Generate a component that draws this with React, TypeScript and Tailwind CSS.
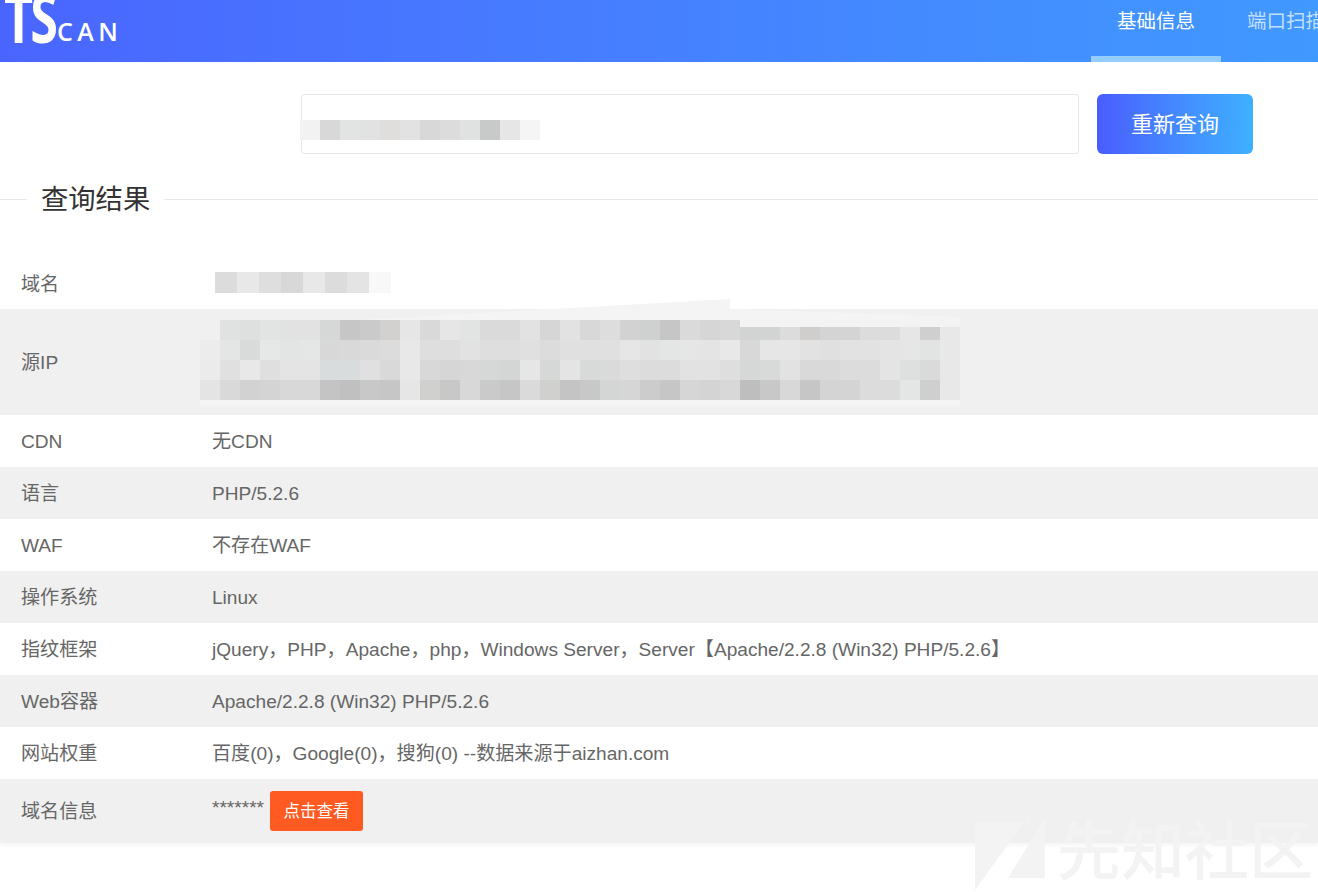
import type { ReactNode } from "react";

const row2Mosaic = [
  ["#f0f0f0", "#e0e2e1", "#dedfdf", "#e2e3e3", "#e2e2e2", "#e2e2e2", "#d6d8d8", "#c6c6c6", "#cacaca", "#d2d1d0", "#e6e6e6", "#d9d9d9", "#e6e6e6", "#e2e3e3", "#dadada", "#dadada", "#e2e2e2", "#d6d6d6", "#e2e2e2", "#d8d8d8", "#dddddd", "#d2d2d2", "#cfd1d1", "#c6c6c6", "#dadada", "#d6d6d6", "#d8d8d8", "#d2d4d4", "#d2d4d4", "#dcdcdc", "#cfcecd", "#d4d4d4", "#d4d4d4", "#dcdcdc", "#dcdcdc", "#e6e6e6", "#cfcfcf", "#e8e8e8"],
  ["#ececec", "#e4e6e5", "#d9dada", "#e6e7e7", "#e3e5e5", "#e5e6e6", "#d8d8d8", "#d9d9d9", "#dadada", "#dcdcdc", "#e8e8e8", "#dedede", "#dedede", "#e2e2e2", "#dedede", "#dedede", "#e0e0e0", "#dcdcdc", "#e0e0e0", "#e0e0e0", "#e0e0e0", "#e6e6e6", "#e2e2e2", "#e4e6e6", "#e6e6e6", "#e4e4e4", "#e8e8e8", "#d8d8d8", "#e6e6e6", "#e6e6e6", "#e2e2e2", "#e0e0e0", "#e2e2e2", "#e2e2e2", "#e4e4e4", "#e6e6e6", "#e2e4e4", "#e8e8e8"],
  ["#ebebeb", "#e0e0e0", "#e8e8e8", "#dfdfdf", "#e4e4e4", "#e4e4e4", "#d9dcdc", "#d9dcdc", "#e0e0e0", "#d9d9d9", "#e8e8e8", "#d8d8d8", "#d6d6d6", "#d8d8d8", "#d6d8d8", "#d4d6d6", "#e6e6e6", "#d6d8d8", "#e4e4e4", "#d8dada", "#dadada", "#dedede", "#dcdcdc", "#dcdcdc", "#e2e2e2", "#e2e2e2", "#dedede", "#d6d8d8", "#d8dada", "#e2e2e2", "#d9d9d9", "#d9d9d9", "#dcdcdc", "#dcdcdc", "#e4e4e4", "#dee0e0", "#dadada", "#e8e8e8"],
  ["#e4e4e4", "#d9d9d9", "#d2d2d2", "#d4d4d4", "#d8d8d8", "#d8d8d8", "#c4c4c4", "#c0c0c0", "#c8c8c8", "#c6c6c6", "#e6e6e6", "#d0d0ce", "#c8c8c8", "#d8d8d8", "#cacaca", "#c6c6c6", "#dadada", "#d0d0ce", "#c4c4c4", "#c8c8c8", "#d4d6d6", "#d6d6d6", "#cccccc", "#c6c6c6", "#d6d6d6", "#d4d4d4", "#d8d8d8", "#bebebe", "#c8c8c8", "#d8d8d8", "#c6c6c6", "#d4d4d4", "#d4d4d4", "#dcdcdc", "#dcdcdc", "#e4e6e6", "#cfcfcf", "#e8e8e8"],
];
const row1Mosaic = [["#dcdcdc", "#e8e8e8", "#dedede", "#d8d8d8", "#e8e8e8", "#dcdcdc", "#e4e4e4", "#f8f8f8"]];
const inputMosaic = [["#f2f2f2", "#d8d8d8", "#e2e4e4", "#e2e2e2", "#e0dedc", "#e2e2e2", "#d8d8d8", "#dcdcdc", "#e0e2e2", "#c8caca", "#e6e6e6", "#f5f5f5"]];

// blurred-out values in the screenshot
const Mosaic = ({ cells, w, h, className }: { cells: string[][]; w: number; h: number; className: string }) => (
  <svg className={className} width={cells[0].length * w} height={cells.length * h}>
    {cells.map((row, y) => row.map((c, x) => <rect key={x + "-" + y} x={x * w} y={y * h} width={w} height={h} fill={c} />))}
  </svg>
);

const rows: { label: string; value: ReactNode }[] = [
  { label: "CDN", value: "无CDN" },
  { label: "语言", value: "PHP/5.2.6" },
  { label: "WAF", value: "不存在WAF" },
  { label: "操作系统", value: "Linux" },
  { label: "指纹框架", value: "jQuery，PHP，Apache，php，Windows Server，Server【Apache/2.2.8 (Win32) PHP/5.2.6】" },
  { label: "Web容器", value: "Apache/2.2.8 (Win32) PHP/5.2.6" },
  { label: "网站权重", value: "百度(0)，Google(0)，搜狗(0) --数据来源于aizhan.com" },
];

const Row = ({ label, children, grey, h }: { label: string; children?: ReactNode; grey: boolean; h: string }) => (
  <div className={`relative flex items-center pt-[2px] ${h} ${grey ? "bg-[#f0f0f0]" : "bg-white"}`}>
    <div className="w-[212px] shrink-0 pl-[21px]">{label}</div>
    <div className="flex items-center whitespace-nowrap">{children}</div>
  </div>
);

export default function App() {
  return (
    <div className="relative h-[892px] w-[1318px] overflow-hidden bg-white font-['Liberation_Sans','Noto_Sans_CJK_SC',sans-serif] text-[19.1px] text-[#666666]">
      <header className="flex h-[62px] bg-gradient-to-r from-[#4a65ff] to-[#4099ff] text-white">
        <div className="flex h-[62px] w-[1091px] shrink-0 overflow-hidden pl-[4px] font-['Open_Sans',sans-serif]">
          <span className="mt-[-17px] w-[53px] shrink-0 origin-left scale-x-[0.74] text-[68px] leading-[68px] font-bold tracking-[-4px]">TS</span>
          <span className="mt-[14px] text-[25px] leading-[34px] font-semibold tracking-[4.5px]">CAN</span>
        </div>
        <nav className="flex shrink-0">
          <div className="h-[62px] w-[130px] border-b-[6px] border-[#93cdff] pt-[7px] text-center text-[19.5px] leading-[28px]">基础信息</div>
          <div className="h-[62px] w-[130px] pt-[7px] text-center text-[19.5px] leading-[28px] text-white/70">端口扫描</div>
        </nav>
      </header>

      <div className="flex gap-[18px] pt-[32px] pl-[301px]">
        <div className="relative h-[60px] w-[778px] rounded-[3px] border border-[#e6e6e6] bg-white">
          <Mosaic cells={inputMosaic} w={20} h={20} className="absolute top-[25px] left-[-2px]" />
        </div>
        <button className="h-[60px] w-[156px] rounded-[6px] bg-gradient-to-r from-[#4a5bff] to-[#3eb0ff] text-[22px] text-white">重新查询</button>
      </div>

      <div className="mt-[25px] flex h-[40px] items-center">
        <div className="h-px w-[27px] bg-[#e8e8e8]" />
        <div className="px-[14px] pt-[2px] text-[27.3px] leading-[40px] text-[#333333]">查询结果</div>
        <div className="h-px flex-1 bg-[#e8e8e8]" />
      </div>

      <div className="mt-[38px] shadow-[0_2px_4px_rgba(0,0,0,0.05)]">
        <Row label="域名" grey={false} h="h-[52px] pt-[4px]">
          <Mosaic cells={row1Mosaic} w={22} h={21} className="absolute top-[15px] left-[215px]" />
        </Row>
        <Row label="源IP" grey h="h-[106px]">
          <svg className="absolute top-[-10px] left-[190px]" width="790" height="125">
            <polygon points="10,30 540,0 540,10 770,18 770,106 10,106" fill="#f4f4f4" />
          </svg>
          <Mosaic cells={row2Mosaic} w={20} h={20} className="absolute top-[11px] left-[200px]" />
          <svg className="absolute top-[11px] left-[740px]" width="220" height="7">
            <rect width="220" height="7" fill="#f3f3f3" />
          </svg>
        </Row>
        {rows.map((r, i) => (
          <Row key={r.label} label={r.label} grey={i % 2 === 1} h="h-[52px]">
            {r.value}
          </Row>
        ))}
        <Row label="域名信息" grey h="h-[64px]">
          <span className="mt-[-8px]">*******</span>
          <button className="mt-[-2px] ml-[6px] h-[40px] w-[93px] rounded-[3px] bg-[#ff5a22] text-[16.5px] text-white">点击查看</button>
        </Row>
      </div>

      {/* community watermark */}
      <div className="absolute top-[810px] left-[974px] flex items-start">
        <svg width="76" height="80" viewBox="0 0 76 80" fill="#f3f3f3">
          <polygon points="1,12 53,12 59,0 1,80" />
          <polygon points="71,8 71,68 34,68" />
        </svg>
        <span className="mt-[7px] ml-[7px] text-[64px] leading-[70px] font-medium text-[#f3f3f3]">先知社区</span>
      </div>
    </div>
  );
}
